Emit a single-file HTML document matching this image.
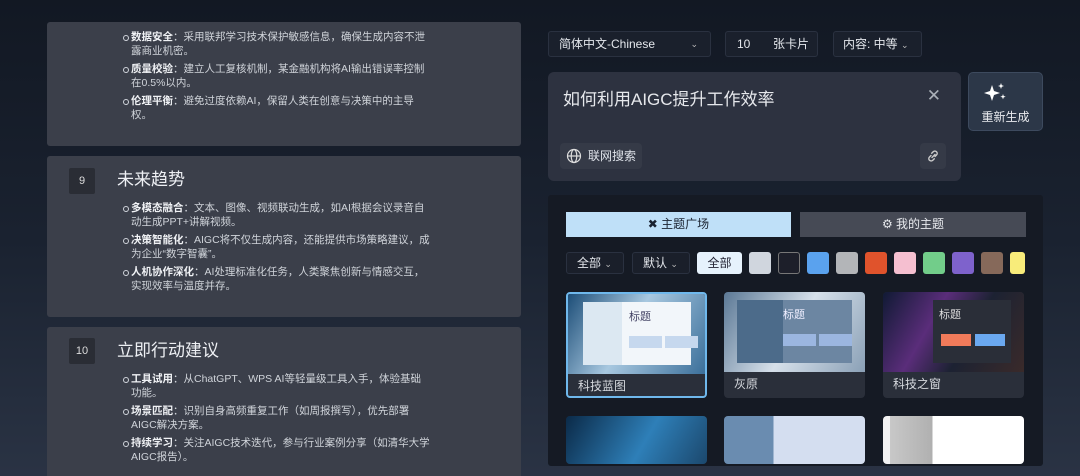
<!DOCTYPE html>
<html><head><meta charset="utf-8"><style>
*{margin:0;padding:0;box-sizing:border-box}
html,body{width:1080px;height:476px;overflow:hidden}
body{background:linear-gradient(180deg,#121823 0%,#1a2230 50%,#2a3344 100%);font-family:"Liberation Sans","Noto Sans CJK SC",sans-serif;color:#dfe3ea;position:relative}
.card{position:absolute;left:47px;width:474px;background:#3b3f4a;border-radius:3px}
.num{position:absolute;left:22px;width:26px;height:26px;background:#2a2d35;color:#ddd;font-size:11px;text-align:center;line-height:26px;border-radius:2px}
.title{position:absolute;left:70px;font-size:17px;color:#eef0f4}
ul{position:absolute;left:84px;width:300px;list-style:none;font-size:10.5px;line-height:14px;color:#d0d4da}
li{position:relative;margin-bottom:4px}
li:before{content:"";position:absolute;left:-8px;top:5px;width:4px;height:4px;border:1px solid #cfd3da;border-radius:50%}
b{color:#f0f2f5}
.box{position:absolute;background:#1a202c;border:1px solid #2a3140;border-radius:3px;font-size:12px;color:#e4e7ec;height:26px;line-height:24px}
.chev{font-size:9px;color:#bbb}
.sw{position:absolute;top:252px;width:22px;height:22px;border-radius:3px}
.tc{position:absolute;width:141px;height:106px;background:#2a2f3a;border-radius:4px;overflow:hidden}
.tc .img{height:80px;position:relative}
.tc .lb{font-size:12px;color:#d6d9de;padding:3px 0 0 10px}
.tc .sl{position:absolute;top:8px;height:63px;padding:6px 6px;font-size:11px}
.blk{position:absolute;top:34px;width:33px;height:12px}
</style></head><body>

<div class="card" style="top:22px;height:124px">
<ul style="top:8px">
<li><b>数据安全</b>：采用联邦学习技术保护敏感信息，确保生成内容不泄露商业机密。</li>
<li><b>质量校验</b>：建立人工复核机制，某金融机构将AI输出错误率控制在0.5%以内。</li>
<li><b>伦理平衡</b>：避免过度依赖AI，保留人类在创意与决策中的主导权。</li>
</ul></div>

<div class="card" style="top:156px;height:161px">
<div class="num" style="top:12px">9</div>
<div class="title" style="top:9px">未来趋势</div>
<ul style="top:45px">
<li><b>多模态融合</b>：文本、图像、视频联动生成，如AI根据会议录音自动生成PPT+讲解视频。</li>
<li><b>决策智能化</b>：AIGC将不仅生成内容，还能提供市场策略建议，成为企业“数字智囊”。</li>
<li><b>人机协作深化</b>：AI处理标准化任务，人类聚焦创新与情感交互，实现效率与温度并存。</li>
</ul></div>

<div class="card" style="top:327px;height:160px">
<div class="num" style="top:11px">10</div>
<div class="title" style="top:9px">立即行动建议</div>
<ul style="top:45px">
<li><b>工具试用</b>：从ChatGPT、WPS AI等轻量级工具入手，体验基础功能。</li>
<li><b>场景匹配</b>：识别自身高频重复工作（如周报撰写），优先部署AIGC解决方案。</li>
<li><b>持续学习</b>：关注AIGC技术迭代，参与行业案例分享（如清华大学AIGC报告）。</li>
</ul></div>

<div class="box" style="left:548px;top:31px;width:163px;padding-left:10px">简体中文-Chinese<span class="chev" style="position:absolute;right:12px">⌄</span></div>
<div class="box" style="left:725px;top:31px;width:93px;padding-left:11px">10<span style="position:absolute;left:47px">张卡片</span></div>
<div class="box" style="left:833px;top:31px;width:89px;padding-left:9px">内容: 中等 <span class="chev">⌄</span></div>

<div style="position:absolute;left:548px;top:72px;width:413px;height:109px;background:#2d3240;border-radius:6px">
<div style="position:absolute;left:15px;top:13px;font-size:17px;color:#e6e8ec">如何利用AIGC提升工作效率</div>
<div style="position:absolute;right:20px;top:14px;font-size:17px;color:#aab0b8">✕</div>
<div style="position:absolute;left:12px;top:71px;width:82px;height:26px;background:#353a47;border-radius:4px;font-size:12px;line-height:26px;padding-left:28px">联网搜索
<svg style="position:absolute;left:6px;top:5px" width="16" height="16" viewBox="0 0 16 16" fill="none" stroke="#ddd" stroke-width="1.2"><circle cx="8" cy="8" r="6.5"/><ellipse cx="8" cy="8" rx="2.8" ry="6.5"/><path d="M1.5 8h13"/></svg></div>
<div style="position:absolute;left:372px;top:71px;width:26px;height:26px;background:#353a47;border-radius:4px">
<svg style="position:absolute;left:5px;top:5px" width="16" height="16" viewBox="0 0 16 16" fill="none" stroke="#ccc" stroke-width="1.4" stroke-linecap="round"><path d="M7 9.5l3-3M6 7.5L4.5 9a2.3 2.3 0 003.3 3.3L9.3 10.8M10 8.5l1.5-1.5a2.3 2.3 0 00-3.3-3.3L6.7 5.2"/></svg></div>
</div>

<div style="position:absolute;left:968px;top:72px;width:75px;height:59px;background:#2c3748;border:1px solid #3d4a5e;border-radius:5px;text-align:center">
<svg style="position:absolute;left:14px;top:9px" width="26" height="22" viewBox="0 0 26 22" fill="#fff"><path d="M9 3l2 6 6 2-6 2-2 6-2-6-6-2 6-2z"/><path d="M18 1l.8 2.2L21 4l-2.2.8L18 7l-.8-2.2L15 4l2.2-.8z"/><path d="M20 12l.7 2 2 .7-2 .7-.7 2-.7-2-2-.7 2-.7z"/></svg>
<div style="position:absolute;top:35px;width:100%;font-size:12px;color:#e8eaee">重新生成</div></div>

<div style="position:absolute;left:548px;top:195px;width:495px;height:271px;background:#151a24;border-radius:3px"></div>
<div style="position:absolute;left:566px;top:212px;width:225px;height:25px;background:#bfe0f8;font-size:12px;color:#1a2230;text-align:center;line-height:25px">✖ 主题广场</div>
<div style="position:absolute;left:800px;top:212px;width:226px;height:25px;background:#464a55;font-size:12px;color:#e8eaee;text-align:center;line-height:25px">⚙ 我的主题</div>

<div class="box" style="left:566px;top:252px;width:58px;height:22px;line-height:20px;padding-left:10px;background:#1a1f2a">全部 <span class="chev">⌄</span></div>
<div class="box" style="left:632px;top:252px;width:58px;height:22px;line-height:20px;padding-left:10px;background:#1a1f2a">默认 <span class="chev">⌄</span></div>
<div class="sw" style="left:697px;width:45px;background:#e6f2fc;color:#223;font-size:12px;text-align:center;line-height:22px">全部</div>
<div class="sw" style="left:749px;background:#d0d6de"></div>
<div class="sw" style="left:778px;background:#1d1f2a;border:1px solid #777"></div>
<div class="sw" style="left:807px;background:#5aa2ee"></div>
<div class="sw" style="left:836px;background:#b3b5b8"></div>
<div class="sw" style="left:865px;background:#e0532c"></div>
<div class="sw" style="left:894px;background:#f5bfd0"></div>
<div class="sw" style="left:923px;background:#72cd8a"></div>
<div class="sw" style="left:952px;background:#7e62cc"></div>
<div class="sw" style="left:981px;background:#86695a"></div>
<div class="sw" style="left:1010px;width:15px;background:#f8ec7a"></div>

<div class="tc" style="left:566px;top:292px;border:2px solid #6fb8ec"><div class="img" style="background:linear-gradient(120deg,#1d4e78,#a8c8e0 45%,#3b6f9a)"><div class="sl" style="left:15px;width:108px;background:linear-gradient(90deg,#dce8f2 36%,#f2f6fa 36%);color:#446"><span style="margin-left:40px">标题</span><div class="blk" style="left:46px;background:#c6d8ee"></div><div class="blk" style="left:82px;background:#c6d8ee"></div></div></div><div class="lb">科技蓝图</div></div>
<div class="tc" style="left:724px;top:292px"><div class="img" style="background:linear-gradient(120deg,#5b7895,#d6e0ea 50%,#8aa0b6)"><div class="sl" style="left:13px;width:115px;background:linear-gradient(90deg,#4c6b8a 40%,#6c86a2 40%);color:#eef"><span style="margin-left:40px">标题</span><div class="blk" style="left:46px;background:#9bb6e0"></div><div class="blk" style="left:82px;background:#9bb6e0"></div></div></div><div class="lb">灰原</div></div>
<div class="tc" style="left:883px;top:292px"><div class="img" style="background:linear-gradient(120deg,#101a34,#5a2d7a 35%,#1c2232 60%,#3a2a2a)"><div class="sl" style="left:50px;width:78px;background:#2a2e38;color:#ddd">标题<div class="blk" style="left:8px;width:30px;background:#f07a5a"></div><div class="blk" style="left:42px;width:30px;background:#6aa8f0"></div></div></div><div class="lb">科技之窗</div></div>

<div class="tc" style="left:566px;top:416px;height:48px"><div class="img" style="background:linear-gradient(120deg,#0b2a48,#2e7fb8 50%,#173a5a)"></div></div>
<div class="tc" style="left:724px;top:416px;height:48px"><div class="img" style="background:linear-gradient(90deg,#6a8cb0 35%,#d4def0 35%)"></div></div>
<div class="tc" style="left:883px;top:416px;height:48px"><div class="img" style="background:linear-gradient(90deg,#f2f2f2 5%,#c8c8c8 5%,#b0b0b0 35%,#ffffff 35%)"></div></div>

</body></html>
